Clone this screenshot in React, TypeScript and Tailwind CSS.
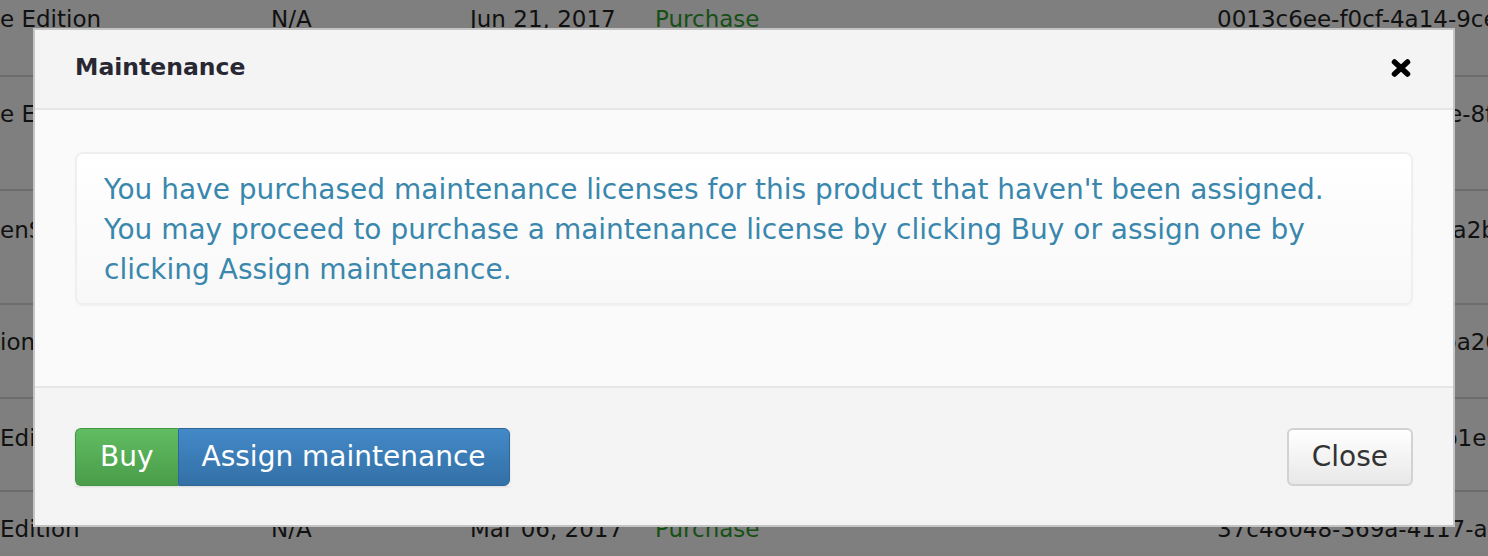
interface Row {
  name: string;
  version: string;
  date: string;
  kind: string;
  id: string;
  height: string;
  pad: string;
}

const rows: Row[] = [
  { name: "e Edition", version: "N/A", date: "Jun 21, 2017", kind: "Purchase", id: "0013c6ee-f0cf-4a14-9ce", height: "h-[75px]", pad: "pt-[6px]" },
  { name: "e Edition", version: "N/A", date: "Jun 21, 2017", kind: "Purchase", id: "6a0d1c33-ad34-4c1e-8f", height: "h-[114px]", pad: "pt-[24px]" },
  { name: "enSource Edition", version: "N/A", date: "May 02, 2017", kind: "Purchase", id: "7ae1f8a6-2b1e-48f2a2b", height: "h-[114px]", pad: "pt-[26px]" },
  { name: "ion", version: "N/A", date: "Apr 11, 2017", kind: "Purchase", id: "93b2c4de-77f0-4c8ba20", height: "h-[94px]", pad: "pt-[24px]" },
  { name: "Edition", version: "N/A", date: "Mar 28, 2017", kind: "Purchase", id: "5f1d0e9a-c3a2-4d5b1e", height: "h-[93px]", pad: "pt-[26px]" },
  { name: "Edition", version: "N/A", date: "Mar 06, 2017", kind: "Purchase", id: "37c48048-369a-4117-a0", height: "h-[80px]", pad: "pt-[24px]" },
];

const font = { fontFamily: '"DejaVu Sans", Verdana, sans-serif' };

export default function App() {
  return (
    <div className="relative h-[556px] w-[1488px] overflow-hidden bg-[#7f7f7f]" style={font}>
      {/* table behind the overlay */}
      <div className="flex flex-col text-[23px] leading-[26px] text-[#111]">
        {rows.map((row, i) => (
          <div
            key={i}
            className={`flex ${row.height} ${row.pad} ${i > 0 ? "border-t-2 border-[#6c6c6c]" : ""}`}
          >
            <div className="w-[271px] shrink-0 overflow-hidden whitespace-nowrap">{row.name}</div>
            <div className="w-[199px] shrink-0">{row.version}</div>
            <div className="w-[185px] shrink-0 whitespace-nowrap">{row.date}</div>
            <div className="w-[562px] shrink-0 text-[#165016]">{row.kind}</div>
            <div className="shrink-0 whitespace-nowrap">{row.id}</div>
          </div>
        ))}
      </div>

      {/* modal */}
      <div className="absolute left-[33px] top-[28px] flex h-[499px] w-[1422px] flex-col border-2 border-[#c4c4c4] bg-[#fafafa]">
        <div className="flex h-[80px] shrink-0 items-center justify-between border-b-2 border-[#e6e6e6] bg-[#f4f4f4] pl-[40px] pr-[41px]">
          <h3 className="pb-[2px] text-[23.5px] font-bold text-[#282833]">Maintenance</h3>
          <svg width="22" height="20" viewBox="0 0 22 20" className="mb-[2px]">
            <path d="M4.5 4 L17.5 16 M17.5 4 L4.5 16" stroke="#000" strokeWidth="5.5" strokeLinecap="round" />
          </svg>
        </div>

        <div className="flex-1 px-[40px] pt-[42px]">
          <div className="h-[153px] rounded-[8px] border-2 border-[#efefef] bg-gradient-to-b from-white to-[#f8f8f8] px-[27px] pt-[16px] text-[28px] leading-[40px] text-[#3a87ad] shadow-[0_1px_2px_rgba(0,0,0,0.04)]">
            <p className="whitespace-nowrap">You have purchased maintenance licenses for this product that haven't been assigned.</p>
            <p className="whitespace-nowrap">You may proceed to purchase a maintenance license by clicking Buy or assign one by</p>
            <p className="whitespace-nowrap">clicking Assign maintenance.</p>
          </div>
        </div>

        <div className="flex h-[139px] shrink-0 items-center justify-between border-t-2 border-[#e6e6e6] bg-[#f4f4f4] px-[40px]">
          <div className="flex h-[58px] text-[28px] text-white shadow-[0_1px_2px_rgba(0,0,0,0.1)]">
            <button className="flex h-full items-center rounded-l-[6px] border border-r-0 border-[#449544] bg-gradient-to-b from-[#61bd61] to-[#4a9c4a] px-[24px]">
              Buy
            </button>
            <button className="flex h-full items-center rounded-r-[6px] border border-[#2f6799] bg-gradient-to-b from-[#4389c8] to-[#3370a6] px-[23px]">
              Assign maintenance
            </button>
          </div>
          <button className="flex h-[58px] items-center rounded-[6px] border-2 border-[#d2d2d2] bg-gradient-to-b from-white to-[#e8e8e8] px-[23px] text-[28px] text-[#333]">
            Close
          </button>
        </div>
      </div>
    </div>
  );
}
